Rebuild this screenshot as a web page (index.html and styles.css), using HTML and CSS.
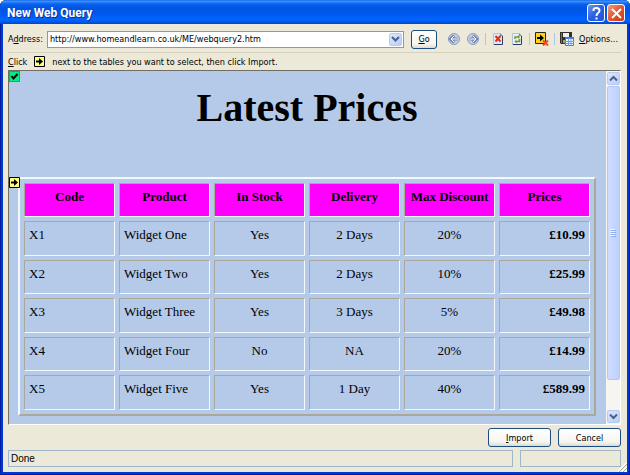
FILE: index.html
```html
<!DOCTYPE html>
<html lang="en">

<head>
    <meta charset="UTF-8">
    <meta name="viewport" content="width=device-width, initial-scale=1.0">
    <title>New Web Query</title>
    <link rel="stylesheet" href="styles.css">
</head>

<body>
    <div class="window">
        <!-- Title bar -->
        <div class="titlebar">
            <span class="title">New Web Query</span>
            <button class="title-btn help" aria-label="Help">
                <svg width="17" height="17" viewBox="0 0 17 17"><path d="M5.500 6V5q0-2 3-2t3 2.500q0 1.500-1.500 2.500T8.500 11M8.500 12.500v2" fill="none" stroke="#fff" stroke-width="2"/></svg>
            </button>
            <button class="title-btn close" aria-label="Close">
                <svg width="17" height="17" viewBox="0 0 17 17"><path d="M4 4l9 9M13 4l-9 9" stroke="#fff" stroke-width="2"/></svg>
            </button>
        </div>

        <div class="content">
            <!-- Address bar -->
            <div class="toolbar">
                <label for="address">A<u>d</u>dress:</label>
                <div class="combo">
                    <input type="text" id="address" value="http://www.homeandlearn.co.uk/ME/webquery2.htm">
                    <button class="scroll-btn" aria-label="Show addresses">
                        <svg width="9" height="7" viewBox="0 0 9 7"><path d="M1 1l3.500 3.500L8 1" fill="none" stroke="#4d6185" stroke-width="2"/></svg>
                    </button>
                </div>
                <button class="btn go"><u>G</u>o</button>
                <div class="tools">
                    <button class="tool" aria-label="Back">
                        <svg width="14" height="14" viewBox="0 0 14 14"><circle cx="7" cy="7" r="5.500" fill="#c3cfe3" stroke="#8f9fbd"/><path d="M10.500 7H4M7 3.500L3.500 7L7 10.500" fill="none" stroke="#7186ae" stroke-width="3"/><path d="M10.500 7H4M7 4L4 7l3 3" fill="none" stroke="#fff"/></svg>
                    </button>
                    <button class="tool" aria-label="Forward">
                        <svg width="14" height="14" viewBox="0 0 14 14"><circle cx="7" cy="7" r="5.500" fill="#c3cfe3" stroke="#8f9fbd"/><path d="M3.500 7H10M7 3.500L10.500 7L7 10.500" fill="none" stroke="#7186ae" stroke-width="3"/><path d="M3.500 7H10M7 4l3 3l-3 3" fill="none" stroke="#fff"/></svg>
                    </button>
                    <span class="divider"></span>
                    <button class="tool" aria-label="Stop">
                        <svg width="14" height="14" viewBox="0 0 14 14"><path d="M3 1h6l3 3v9H3z" fill="#dfe9f8"/><path d="M2.500 13V1.500H9" fill="none" stroke="#b3c2dc"/><path d="M11.500 4v8.500H3" fill="none" stroke="#283a66"/><path d="M9 1v3h3z" fill="#6f86b4"/><path d="M4.500 4l5 5.500M9.500 4l-5 5.500" stroke="#e03014" stroke-width="2"/></svg>
                    </button>
                    <button class="tool" aria-label="Refresh">
                        <svg width="14" height="14" viewBox="0 0 14 14"><path d="M3 1h6l3 3v9H3z" fill="#e7effa"/><path d="M2.500 13V1.500H9" fill="none" stroke="#b3c2dc"/><path d="M11.500 4v8.500H3" fill="none" stroke="#283a66"/><path d="M9 1v3h3z" fill="#6f86b4"/><path d="M5 7V5h3.500M9.500 7v2.500H6" fill="none" stroke="#6f9a22" stroke-width="1.500"/><path d="M8 3l2 2l-2 2zM6.500 7.500v4l-2-2z" fill="#6f9a22"/></svg>
                    </button>
                    <span class="divider"></span>
                    <button class="tool" aria-label="Hide icons">
                        <svg width="14" height="14" viewBox="0 0 14 14"><path d="M.5.5h10v11H.5z" fill="#ffd21c" stroke="#2b2410"/><path d="M2 5h3V2.500L9 6L5 9.500V7H2z" fill="#000"/><path d="M8 8.500l5 5M13 8.500l-5 5" stroke="#f04a24" stroke-width="2"/></svg>
                    </button>
                    <span class="divider"></span>
                    <button class="tool" aria-label="Save query">
                        <svg width="14" height="14" viewBox="0 0 14 14"><path d="M0 0h12v12H1L0 11z" fill="#30302c"/><path d="M3 1h6v4H3z" fill="#f5f0e6"/><path d="M1 1h1v10H1z" fill="#77705e"/><path d="M3 8h4v3H3z" fill="#a59c86"/><path d="M5.500 5.500h8v8h-8z" fill="#fff" stroke="#3d7de0"/><path d="M5 5h9v2H5z" fill="#3d7de0"/><path d="M8.500 6v8M11 6v8M5 9.500h9M5 11.500h9" stroke="#6b9df0"/></svg>
                    </button>
                    <button class="tool options"><u>O</u>ptions...</button>
                </div>
            </div>

            <p class="hint">
                <span><u>C</u>lick</span>
                <svg class="marker" width="11" height="11" viewBox="0 0 11 11"><path d="M.5.5h10v10H.5z" fill="#ffff84" stroke="#000"/><path d="M2 4.500h3V2l4 3.500L5 9V6.500H2z"/></svg>
                <span>next to the tables you want to select, then click Import.</span>
            </p>

            <!-- Web page preview -->
            <div class="preview">
                <div class="page">
                    <svg class="marker page-marker" width="11" height="11" viewBox="0 0 11 11"><path d="M.5.5h10v10H.5z" fill="#00f080" stroke="#174f38" stroke-dasharray="1 1"/><path d="M2.500 5L4.500 7.500L8.500 3" fill="none" stroke="#000" stroke-width="2"/></svg>
                    <h1>Latest Prices</h1>
                    <div class="table-container">
                        <svg class="marker table-marker" width="11" height="11" viewBox="0 0 11 11"><path d="M.5.5h10v10H.5z" fill="#ffff84" stroke="#000"/><path d="M2 4.500h3V2l4 3.500L5 9V6.500H2z"/></svg>
                        <table>
                            <thead>
                                <tr>
                                    <th>Code</th>
                                    <th>Product</th>
                                    <th>In Stock</th>
                                    <th>Delivery</th>
                                    <th>Max Discount</th>
                                    <th>Prices</th>
                                </tr>
                            </thead>
                            <tbody>
                                <tr>
                                    <td class="name">X1</td>
                                    <td class="name">Widget One</td>
                                    <td>Yes</td>
                                    <td>2 Days</td>
                                    <td>20%</td>
                                    <td class="price">£10.99</td>
                                </tr>
                                <tr>
                                    <td class="name">X2</td>
                                    <td class="name">Widget Two</td>
                                    <td>Yes</td>
                                    <td>2 Days</td>
                                    <td>10%</td>
                                    <td class="price">£25.99</td>
                                </tr>
                                <tr>
                                    <td class="name">X3</td>
                                    <td class="name">Widget Three</td>
                                    <td>Yes</td>
                                    <td>3 Days</td>
                                    <td>5%</td>
                                    <td class="price">£49.98</td>
                                </tr>
                                <tr>
                                    <td class="name">X4</td>
                                    <td class="name">Widget Four</td>
                                    <td>No</td>
                                    <td>NA</td>
                                    <td>20%</td>
                                    <td class="price">£14.99</td>
                                </tr>
                                <tr>
                                    <td class="name">X5</td>
                                    <td class="name">Widget Five</td>
                                    <td>Yes</td>
                                    <td>1 Day</td>
                                    <td>40%</td>
                                    <td class="price">£589.99</td>
                                </tr>
                            </tbody>
                        </table>
                    </div>
                </div>
                <div class="scrollbar">
                    <button class="scroll-btn" aria-label="Scroll up">
                        <svg width="9" height="7" viewBox="0 0 9 7"><path d="M1 5.500L4.500 2L8 5.500" fill="none" stroke="#4d6185" stroke-width="2"/></svg>
                    </button>
                    <div class="track">
                        <div class="thumb">
                            <svg width="6" height="8" viewBox="0 0 6 8"><path d="M0 .5h5M0 2.500h5M0 4.500h5M0 6.500h5" stroke="#eef4fe"/><path d="M1 1.500h5M1 3.500h5M1 5.500h5M1 7.500h5" stroke="#8cb0f8"/></svg>
                        </div>
                    </div>
                    <button class="scroll-btn" aria-label="Scroll down">
                        <svg width="9" height="7" viewBox="0 0 9 7"><path d="M1 1.500L4.500 5L8 1.500" fill="none" stroke="#4d6185" stroke-width="2"/></svg>
                    </button>
                </div>
            </div>

            <div class="actions">
                <button class="btn"><u>I</u>mport</button>
                <button class="btn">Cancel</button>
            </div>

            <div class="statusbar">
                <div class="status">Done</div>
                <div class="status progress"></div>
            </div>
            <svg class="grip" width="9" height="9" viewBox="0 0 9 9"><path d="M0 9L9 0M4 9l5-5M7 9l2-2" stroke="#fff" stroke-width="2"/><path d="M1 9l8-8M5 9l4-4" stroke="#aaa38c"/></svg>
        </div>
    </div>
</body>

</html>
```

FILE: styles.css
```css
* {
    box-sizing: border-box;
}

body {
    margin: 0;
    background-color: #fff;
    font-family: "DejaVu Sans Condensed", "DejaVu Sans", sans-serif;
    font-size: 9px;
    color: #000;
}

button,
input {
    font: inherit;
    color: inherit;
    margin: 0;
    padding: 0;
}

svg {
    display: block;
    flex: none;
}

u {
    text-underline-offset: 1px;
}

.window {
    display: flex;
    flex-direction: column;
    min-height: 100vh;
    padding: 0 3px 3px;
    background-color: #0038d8;
    border-radius: 6px 6px 0 0;
    box-shadow: inset 1px -1px 0 #001ea0, inset -1px 0 0 #001ea0;
}

/* Title bar */

.titlebar {
    display: flex;
    align-items: center;
    gap: 2px;
    height: 24px;
    margin: 0 -3px;
    padding: 2px 5px 0 7px;
    border-radius: 6px 6px 0 0;
    background: linear-gradient(#0a5be0, #3f96ff 1px, #0a62ee 4px, #0054e3 8px, #0058ee 14px, #0066ff 20px, #0046cc 24px);
}

.title {
    flex: 1;
    color: #fff;
    font-family: Roboto, sans-serif;
    font-size: 12px;
    font-weight: bold;
    text-shadow: 1px 1px 0 #0a2f90;
}

.title-btn {
    display: flex;
    align-items: center;
    justify-content: center;
    width: 18px;
    height: 18px;
    border: 1px solid #fff;
    border-radius: 3px;
}

.help {
    background: linear-gradient(135deg, #6b96f4, #2a5ee0 50%, #2255d8);
}

.close {
    background: linear-gradient(135deg, #f0a088, #e4552c 50%, #c83c14);
}

.content {
    position: relative;
    display: flex;
    flex: 1;
    flex-direction: column;
    padding: 0 6px 5px 5px;
    background-color: #ece9d8;
}

/* Address bar */

.toolbar {
    display: flex;
    align-items: center;
    gap: 4px;
    height: 29px;
    padding-top: 2px;
    border-bottom: 1px solid #d6d2bf;
}

.combo {
    display: flex;
    flex: 1;
    height: 17px;
    padding: 1px;
    border: 1px solid #7f9db9;
    background-color: #fff;
}

.combo input {
    flex: 1;
    min-width: 0;
    padding-left: 1px;
    border: 0;
    outline: 0;
    background: none;
}

.scroll-btn {
    display: flex;
    align-items: center;
    justify-content: center;
    width: 13px;
    height: 13px;
    border: 1px solid #b9cbf3;
    border-radius: 2px;
    background: linear-gradient(135deg, #dce7ff, #b9cdf9);
}

.btn {
    width: 63px;
    height: 19px;
    border: 1px solid #1c4c80;
    border-radius: 3px;
    background: linear-gradient(#fff, #f6f5f0 75%, #dedacb);
}

.go {
    width: 26px;
    margin-left: 3px;
}

.tools {
    display: flex;
    align-items: center;
    gap: 5px;
    padding: 0 3px 0 6px;
}

.tool {
    border: 0;
    background: none;
}

.divider {
    width: 1px;
    height: 12px;
    background-color: #a9c8f0;
}

.hint {
    display: flex;
    align-items: center;
    gap: 7px;
    height: 17px;
    margin: 0;
}

/* Web page preview */

.preview {
    display: flex;
    flex: 1;
    border: 1px solid;
    border-color: #716f64 #fff #fff #716f64;
    background-color: #b5cae9;
    font-family: "Liberation Serif", serif;
    font-size: 13px;
}

.page {
    position: relative;
    flex: 1;
    padding: 14px 10px 8px 9px;
}

.page-marker {
    position: absolute;
    top: 0;
    left: 0;
}

h1 {
    margin: 0 0 46px;
    font-size: 40px;
    line-height: 46px;
    text-align: center;
}

.table-container {
    position: relative;
}

.table-marker {
    position: absolute;
    top: 0;
    left: -9px;
}

table {
    width: 100%;
    height: 239px;
    table-layout: fixed;
    border: 2px solid;
    border-color: #f4f8ff #aca899 #aca899 #f4f8ff;
    border-spacing: 4px;
}

th,
td {
    height: 34px;
    padding: 5px 4px;
    border: 1px solid;
    border-color: #aca899 #f4f8ff #f4f8ff #aca899;
    line-height: 15px;
    text-align: center;
    vertical-align: top;
    white-space: nowrap;
}

th {
    background-color: #f0f;
}

.name {
    text-align: left;
}

.price {
    font-weight: bold;
    text-align: right;
}

.scrollbar {
    display: flex;
    flex-direction: column;
    align-items: center;
    width: 14px;
    padding: 1px 0;
    background-color: #f6f5f0;
}

.track {
    flex: 1;
    width: 13px;
    padding: 1px 0;
}

.thumb {
    display: flex;
    align-items: center;
    justify-content: center;
    height: 91%;
    border: 1px solid #b4c8f6;
    border-radius: 2px;
    background: linear-gradient(to right, #cfdcfe, #bdd0fc);
}

/* Buttons and status */

.actions {
    display: flex;
    justify-content: flex-end;
    gap: 7px;
    padding: 3px 0;
}

.statusbar {
    display: flex;
    gap: 7px;
}

.status {
    flex: 1;
    height: 17px;
    padding-left: 2px;
    border: 1px solid #9db8cb;
    font-family: "Liberation Sans", sans-serif;
    font-size: 10px;
    line-height: 15px;
}

.progress {
    flex: 0 0 101px;
}

.grip {
    position: absolute;
    right: 0;
    bottom: 0;
}
```
